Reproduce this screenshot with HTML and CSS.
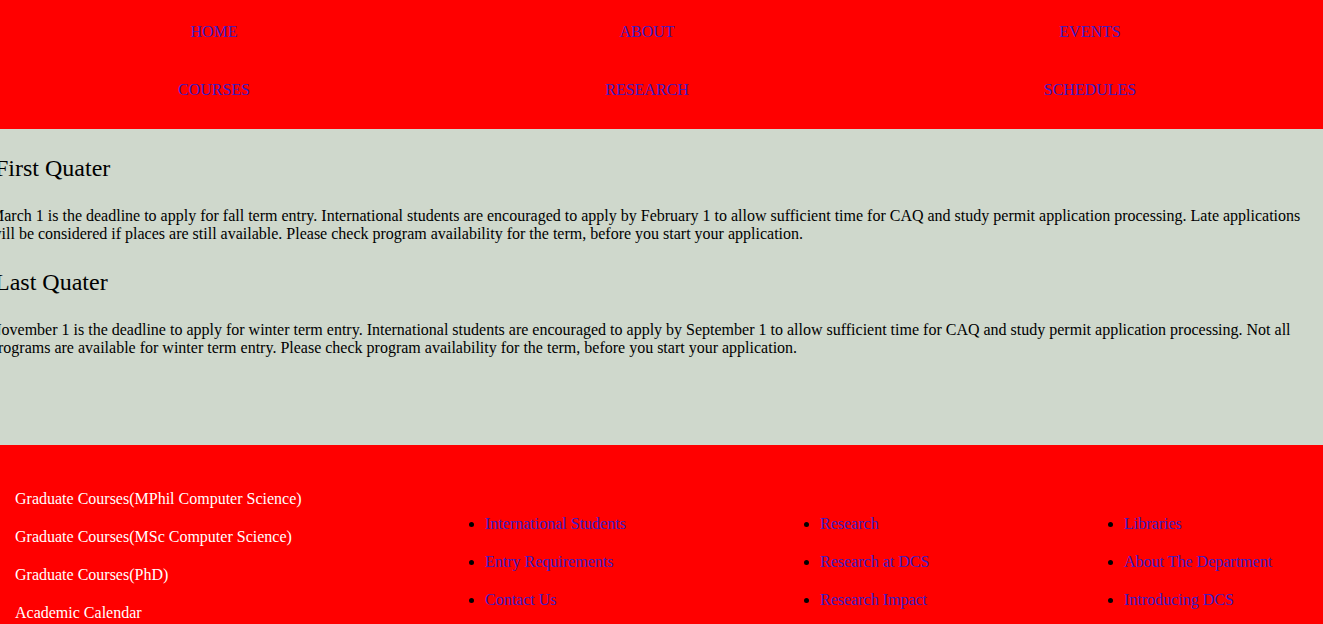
FILE: index.html
```html
<!DOCTYPE html>
<html lang="en">
<head>
<meta charset="utf-8">
<title>Schedules</title>
<link rel="stylesheet" href="styles.css">
</head>
<body>
<nav class="topnav">
  <ul class="nav-grid">
    <li><a href="#">HOME</a></li>
    <li><a href="#">ABOUT</a></li>
    <li><a href="#">EVENTS</a></li>
    <li><a href="#">COURSES</a></li>
    <li><a href="#">RESEARCH</a></li>
    <li><a href="#">SCHEDULES</a></li>
  </ul>
</nav>
<main class="content">
  <h2 class="heading">First Quater</h2>
  <p class="text">March 1 is the deadline to apply for fall term entry. International students are encouraged to apply by February 1 to allow sufficient time for CAQ and study permit application processing. Late applications will be considered if places are still available. Please check program availability for the term, before you start your application.</p>
  <h2 class="heading">Last Quater</h2>
  <p class="text">November 1 is the deadline to apply for winter term entry. International students are encouraged to apply by September 1 to allow sufficient time for CAQ and study permit application processing. Not all programs are available for winter term entry. Please check program availability for the term, before you start your application.</p>
</main>
<footer class="footer">
  <div class="foot-col plain">
    <p>Graduate Courses(MPhil Computer Science)</p>
    <p>Graduate Courses(MSc Computer Science)</p>
    <p>Graduate Courses(PhD)</p>
    <p>Academic Calendar</p>
  </div>
  <ul class="foot-col links">
    <li><a href="#">International Students</a></li>
    <li><a href="#">Entry Requirements</a></li>
    <li><a href="#">Contact Us</a></li>
  </ul>
  <ul class="foot-col links">
    <li><a href="#">Research</a></li>
    <li><a href="#">Research at DCS</a></li>
    <li><a href="#">Research Impact</a></li>
  </ul>
  <ul class="foot-col links">
    <li><a href="#">Libraries</a></li>
    <li><a href="#">About The Department</a></li>
    <li><a href="#">Introducing DCS</a></li>
  </ul>
</footer>
</body>
</html>
```
FILE: styles.css
```css
html, body {
  margin: 0;
  padding: 0;
}
body {
  font-family: "Liberation Serif", "Times New Roman", serif;
  font-size: 16px;
  line-height: 18px;
  color: #000;
  overflow-x: hidden;
}
a {
  color: #3a1ec4;
  text-decoration: none;
}

.topnav {
  background: #ff0000;
  padding: 3px 0 10px;
}
.nav-grid {
  list-style: none;
  margin: 0;
  padding: 0;
  display: grid;
  grid-template-columns: 428fr 438fr 448fr;
  width: 1314px;
}
.nav-grid li {
  padding: 20px 0;
  text-align: center;
}

.content {
  background: #cfd8cc;
  padding: 25px 0 88px;
  display: flex;
  flex-direction: column;
  gap: 25px;
}
.heading {
  margin: 0 0 0 -5px;
  font-size: 24px;
  font-weight: normal;
  line-height: 28px;
}
.text {
  margin: 0 0 0 -10px;
  width: 1325px;
}

.footer {
  background: #ff0000;
  display: grid;
  grid-template-columns: 431px 335px 304px 1fr;
  padding: 45px 0 0 15px;
  min-height: 200px;
}
.foot-col {
  margin: 0;
}
.plain p {
  margin: 0 0 20px;
  color: #fff;
}
.links {
  padding: 25px 0 0 39px;
  list-style: disc;
}
.links li {
  margin-bottom: 20px;
}
```
